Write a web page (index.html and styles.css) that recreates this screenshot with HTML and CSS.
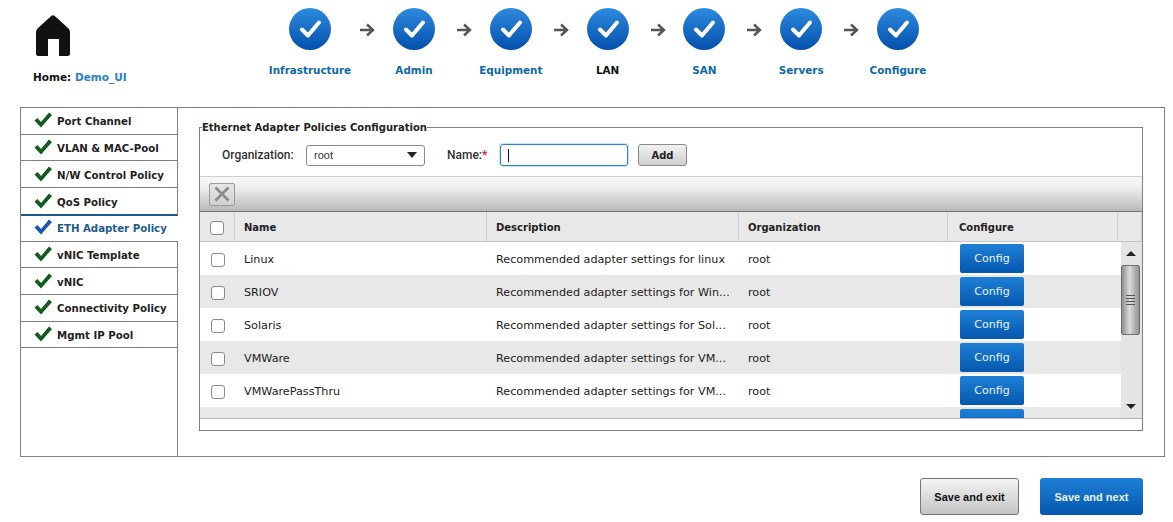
FILE: index.html
```html
<!DOCTYPE html>
<html>
<head>
    <title>Ethernet Adapter Policies</title>
    <link rel="stylesheet" href="styles.css">
</head>
<body>
    <svg width="0" height="0" class="defs">
        <defs>
            <linearGradient id="blueFill" x1="0" y1="0" x2="0" y2="1">
                <stop offset="0" stop-color="#2e8ade"/>
                <stop offset="1" stop-color="#0350ad"/>
            </linearGradient>
            <symbol id="stepDone" viewBox="0 0 42 42">
                <circle cx="21" cy="21" r="21" fill="url(#blueFill)"/>
                <path d="M13 21.5 L19 27.5 L30 14.5" fill="none" stroke="#fff" stroke-width="4" stroke-linecap="round" stroke-linejoin="round"/>
            </symbol>
            <symbol id="stepArrow" viewBox="0 0 16 14">
                <path d="M1 7 H13 M8 1.5 L14 7 L8 12.5" fill="none" stroke="#555" stroke-width="2.4"/>
            </symbol>
            <symbol id="tick" viewBox="0 0 18 16">
                <path d="M0.5 8.5 L3.5 6 L7 10 L15 0.5 L18 3 L7 15.5 Z"/>
            </symbol>
        </defs>
    </svg>

    <header class="top">
        <div class="home">
            <svg class="home_icon" viewBox="0 0 34 41">
                <path fill="#111" d="M15.5 0.7 Q17 -0.3 18.5 0.7 L32.5 13.5 Q34 15 34 17 V38.5 Q34 41 31.5 41 H23 V24 H12 V41 H2.5 Q0 41 0 38.5 V17 Q0 15 1.5 13.5 Z"/>
            </svg>
            <div class="home_text">Home: <span class="home_name">Demo_UI</span></div>
        </div>
        <nav class="steps">
            <div class="step step_first"><svg class="step_icon"><use href="#stepDone"/></svg><span>Infrastructure</span></div>
            <svg class="arrow arrow_first"><use href="#stepArrow"/></svg>
            <div class="step"><svg class="step_icon"><use href="#stepDone"/></svg><span>Admin</span></div>
            <svg class="arrow"><use href="#stepArrow"/></svg>
            <div class="step"><svg class="step_icon"><use href="#stepDone"/></svg><span>Equipment</span></div>
            <svg class="arrow"><use href="#stepArrow"/></svg>
            <div class="step step_current"><svg class="step_icon"><use href="#stepDone"/></svg><span>LAN</span></div>
            <svg class="arrow"><use href="#stepArrow"/></svg>
            <div class="step"><svg class="step_icon"><use href="#stepDone"/></svg><span>SAN</span></div>
            <svg class="arrow"><use href="#stepArrow"/></svg>
            <div class="step"><svg class="step_icon"><use href="#stepDone"/></svg><span>Servers</span></div>
            <svg class="arrow"><use href="#stepArrow"/></svg>
            <div class="step"><svg class="step_icon"><use href="#stepDone"/></svg><span>Configure</span></div>
        </nav>
    </header>

    <div class="panel">
        <ul class="side">
            <li class="side_item"><svg class="tick"><use href="#tick"/></svg>Port Channel</li>
            <li class="side_item"><svg class="tick"><use href="#tick"/></svg>VLAN &amp; MAC-Pool</li>
            <li class="side_item"><svg class="tick"><use href="#tick"/></svg>N/W Control Policy</li>
            <li class="side_item side_before"><svg class="tick"><use href="#tick"/></svg>QoS Policy</li>
            <li class="side_item side_active"><svg class="tick"><use href="#tick"/></svg>ETH Adapter Policy</li>
            <li class="side_item"><svg class="tick"><use href="#tick"/></svg>vNIC Template</li>
            <li class="side_item"><svg class="tick"><use href="#tick"/></svg>vNIC</li>
            <li class="side_item"><svg class="tick"><use href="#tick"/></svg>Connectivity Policy</li>
            <li class="side_item"><svg class="tick"><use href="#tick"/></svg>Mgmt IP Pool</li>
            <li class="side_rest"></li>
        </ul>

        <main class="content">
            <fieldset class="box">
                <legend>Ethernet Adapter Policies Configuration</legend>
                <div class="form_row">
                    <label class="org_label">Organization:</label>
                    <div class="select">root<span class="select_arrow"></span></div>
                    <label class="name_label">Name:<span class="req">*</span></label>
                    <div class="text_input"><span class="caret"></span></div>
                    <button class="add_btn">Add</button>
                </div>

                <div class="toolbar">
                    <button class="delete_btn">
                        <svg viewBox="0 0 16 16" width="16" height="16"><path d="M1.5 1.5 L14.5 14.5 M14.5 1.5 L1.5 14.5" stroke="#8a8a8a" stroke-width="2.6"/></svg>
                    </button>
                </div>

                <div class="grid_head">
                    <div class="cell cell_check"><span class="check"></span></div>
                    <div class="cell">Name</div>
                    <div class="cell">Description</div>
                    <div class="cell">Organization</div>
                    <div class="cell cell_config">Configure</div>
                    <div class="cell"></div>
                </div>

                <div class="grid_body">
                    <div class="rows">
                        <div class="row">
                            <div class="cell_check"><span class="check"></span></div>
                            <div class="row_text">Linux</div>
                            <div class="row_text">Recommended adapter settings for linux</div>
                            <div class="row_text">root</div>
                            <div class="row_btn"><button class="config_btn">Config</button></div>
                        </div>
                        <div class="row">
                            <div class="cell_check"><span class="check"></span></div>
                            <div class="row_text">SRIOV</div>
                            <div class="row_text">Recommended adapter settings for Win...</div>
                            <div class="row_text">root</div>
                            <div class="row_btn"><button class="config_btn">Config</button></div>
                        </div>
                        <div class="row">
                            <div class="cell_check"><span class="check"></span></div>
                            <div class="row_text">Solaris</div>
                            <div class="row_text">Recommended adapter settings for Sol...</div>
                            <div class="row_text">root</div>
                            <div class="row_btn"><button class="config_btn">Config</button></div>
                        </div>
                        <div class="row">
                            <div class="cell_check"><span class="check"></span></div>
                            <div class="row_text">VMWare</div>
                            <div class="row_text">Recommended adapter settings for VM...</div>
                            <div class="row_text">root</div>
                            <div class="row_btn"><button class="config_btn">Config</button></div>
                        </div>
                        <div class="row">
                            <div class="cell_check"><span class="check"></span></div>
                            <div class="row_text">VMWarePassThru</div>
                            <div class="row_text">Recommended adapter settings for VM...</div>
                            <div class="row_text">root</div>
                            <div class="row_btn"><button class="config_btn">Config</button></div>
                        </div>
                        <div class="row">
                            <div class="cell_check"><span class="check"></span></div>
                            <div class="row_text"></div>
                            <div class="row_text"></div>
                            <div class="row_text"></div>
                            <div class="row_btn"><button class="config_btn"></button></div>
                        </div>
                    </div>
                    <div class="scroll">
                        <span class="scroll_up"></span>
                        <div class="scroll_thumb"><span class="grip"></span></div>
                        <span class="scroll_down"></span>
                    </div>
                </div>
            </fieldset>
        </main>
    </div>

    <footer class="actions">
        <button class="save_exit">Save and exit</button>
        <button class="save_next">Save and next</button>
    </footer>
</body>
</html>
```

FILE: styles.css
```css
body{
    margin: 0;
    background-color: #fff;
    font-family: "DejaVu Sans", Verdana, sans-serif;
    font-size: 10px;
    color: #222;
}
button{
    font-family: inherit;
    cursor: pointer;
}
.defs{
    display: block;
    height: 0;
}

/* ---- top bar ---- */
.top{
    display: flex;
    height: 107px;
}
.home{
    width: 268px;
    padding: 15px 0 0 33px;
    box-sizing: border-box;
}
.home_icon{
    display: block;
    width: 34px;
    height: 41px;
    margin-left: 3px;
}
.home_text{
    margin-top: 15px;
    font-size: 10.5px;
    font-weight: bold;
    color: #111;
}
.home_name{
    color: #2a80cc;
}
.steps{
    display: flex;
    align-items: flex-start;
    padding-top: 8px;
}
.step{
    display: flex;
    flex-direction: column;
    align-items: center;
    width: 56px;
    font-size: 10.4px;
    font-weight: bold;
    color: #0d68a8;
    white-space: nowrap;
}
.step_first{
    width: 84px;
}
.step_current{
    color: #111;
}
.step_icon{
    width: 42px;
    height: 42px;
    margin-bottom: 13.5px;
}
.arrow{
    width: 16px;
    height: 14px;
    margin: 15px 10.8px 0 14px;
}
.arrow_first{
    margin: 15px 11px 0 7px;
}

/* ---- main panel ---- */
.panel{
    display: flex;
    height: 350px;
    margin: 0 8px 0 20px;
    border: 1px solid #808080;
    box-sizing: border-box;
}
.side{
    display: flex;
    flex-direction: column;
    width: 157px;
    margin: 0;
    padding: 0;
    list-style: none;
    font-size: 10.2px;
    font-weight: bold;
    color: #222;
}
.side_item{
    display: flex;
    align-items: center;
    height: 26.7px;
    box-sizing: border-box;
    padding: 2px 0 0 13px;
    border-bottom: 1px solid #808080;
    border-right: 1px solid #808080;
    white-space: nowrap;
}
.side_before{
    height: 28px;
    border-bottom: 2px solid #1d5a8c;
}
.side_active{
    height: 25.5px;
    padding-top: 0;
    color: #1d5a8c;
    border-right: none;
}
.side_active .tick{
    margin-top: -3px;
    fill: #1a56b8;
}
.side_rest{
    flex: 1;
    border-right: 1px solid #808080;
}
.tick{
    width: 18px;
    height: 16px;
    margin: -3px 5px 0 0;
    fill: #0f5c1c;
}

.content{
    flex: 1;
    padding: 12px 21px 0 21px;
}
.box{
    height: 311px;
    margin: 0;
    padding: 0;
    box-sizing: border-box;
    border: 1px solid #808080;
}
.box legend{
    margin-left: 2px;
    padding: 2px 0 0 0;
    font-weight: bold;
    color: #222;
    line-height: 12px;
}

/* ---- form line ---- */
.form_row{
    display: flex;
    align-items: center;
    height: 22px;
    margin-top: 10px;
    padding-left: 22px;
    font-family: "Liberation Sans", Arial, sans-serif;
    font-size: 12px;
    color: #333;
}
.org_label, .name_label{
    font-family: "Roboto", sans-serif;
    font-weight: 500;
}
.org_label{
    width: 84px;
}
.select{
    position: relative;
    width: 119px;
    height: 21px;
    box-sizing: border-box;
    padding: 3px 7px;
    margin-right: 22px;
    border: 1px solid #8a8a8a;
    border-radius: 3px;
    background: #fff;
    font-size: 11px;
}
.select_arrow{
    position: absolute;
    right: 7px;
    top: 6px;
    border-style: solid;
    border-width: 6px 5px 0 5px;
    border-color: #222 transparent transparent transparent;
}
.name_label{
    width: 53px;
}
.req{
    color: #d8232a;
}
.text_input{
    display: flex;
    align-items: center;
    width: 128px;
    height: 22px;
    box-sizing: border-box;
    padding-left: 7px;
    border: 1px solid #2a85c8;
    border-radius: 3px;
    box-shadow: 0 0 2px #3a9ae0;
}
.caret{
    width: 1px;
    height: 13px;
    background: #111;
}
.add_btn{
    width: 49px;
    height: 22px;
    margin-left: 10px;
    padding: 0;
    border: 1px solid #8a8a8a;
    border-radius: 3px;
    background: linear-gradient(#f2f2f2, #cfcfcf);
    font-family: "DejaVu Sans", sans-serif;
    font-size: 10px;
    font-weight: bold;
    color: #222;
}

/* ---- grid ---- */
.toolbar{
    display: flex;
    align-items: center;
    height: 35px;
    margin-top: 10px;
    padding-left: 9px;
    box-sizing: border-box;
    border-top: 1px solid #cfcfcf;
    background: linear-gradient(#f6f6f6, #f0f0f0 30%, #b9b9b9);
}
.delete_btn{
    display: flex;
    align-items: center;
    justify-content: center;
    width: 26px;
    height: 23px;
    padding: 0;
    border: 1px solid #9a9a9a;
    border-radius: 2px;
    background: linear-gradient(#e6e6e6, #d0d0d0);
}
.grid_head, .row{
    display: grid;
    grid-template-columns: 35px 252px 252px 209px 170px;
    align-items: center;
}
.grid_head{
    grid-template-columns: 35px 252px 252px 209px 170px 24px;
    height: 31px;
    box-sizing: border-box;
    border-top: 1px solid #777;
    border-bottom: 1px solid #c4c4c4;
    background: #e8e8e8;
    font-weight: bold;
}
.cell{
    display: flex;
    align-items: center;
    height: 100%;
    padding: 2px 0 0 9px;
    box-sizing: border-box;
    border-right: 1px solid #cfcfcf;
}
.cell_config{
    padding-left: 11px;
}
.cell_check{
    display: flex;
    align-items: center;
    justify-content: center;
    padding: 2px 0 0 0;
}
.check{
    width: 14px;
    height: 14px;
    box-sizing: border-box;
    border: 1px solid #8a8a8a;
    border-radius: 3px;
    background: #fff;
}
.grid_body{
    display: flex;
    height: 177px;
    box-sizing: border-box;
    border-bottom: 1px solid #b5b5b5;
}
.rows{
    width: 921px;
    overflow: hidden;
}
.row{
    height: 33px;
    font-size: 11.2px;
    background: #fff;
}
.row_text{
    padding: 2px 0 0 9px;
}
.row_btn{
    padding-left: 9px;
}
.row:nth-child(even){
    background: #e8e8e8;
}
.config_btn{
    display: block;
    width: 64px;
    height: 29px;
    margin-left: 3px;
    padding: 0;
    border: none;
    border-radius: 2px;
    background: linear-gradient(#1f7fd6, #0458ae);
    color: #e8f2fb;
    font-size: 11px;
}
.scroll{
    position: relative;
    flex: 1;
    background: #e4e4e4;
}
.scroll_up, .scroll_down{
    position: absolute;
    left: 5px;
    border-style: solid;
    border-color: transparent;
}
.scroll_up{
    top: 9px;
    border-width: 0 5px 5px 5px;
    border-bottom-color: #222;
}
.scroll_down{
    bottom: 9px;
    border-width: 5px 5px 0 5px;
    border-top-color: #222;
}
.scroll_thumb{
    display: flex;
    align-items: center;
    justify-content: center;
    width: 19px;
    height: 70px;
    margin: 23px 0 0 0;
    box-sizing: border-box;
    border: 1px solid #6f6f6f;
    border-radius: 2px;
    background: linear-gradient(90deg, #8f8f8f, #dcdcdc 45%, #8f8f8f);
}
.grip{
    width: 9px;
    height: 11px;
    background: repeating-linear-gradient(#555 0 1px, transparent 1px 3px);
}

/* ---- footer ---- */
.actions{
    display: flex;
    justify-content: flex-end;
    gap: 21px;
    margin-top: 21px;
    padding-right: 30px;
}
.save_exit, .save_next{
    height: 37px;
    padding: 0;
    font-family: "Liberation Sans", Arial, sans-serif;
    font-size: 11px;
    font-weight: bold;
    border-radius: 3px;
}
.save_exit{
    width: 99px;
    border: 1px solid #777;
    background: linear-gradient(#f4f4f4, #c4c4c4);
    color: #111;
}
.save_next{
    width: 103px;
    border: none;
    background: linear-gradient(#1f7fd6, #0458ae);
    color: #e8f2fb;
}
```
